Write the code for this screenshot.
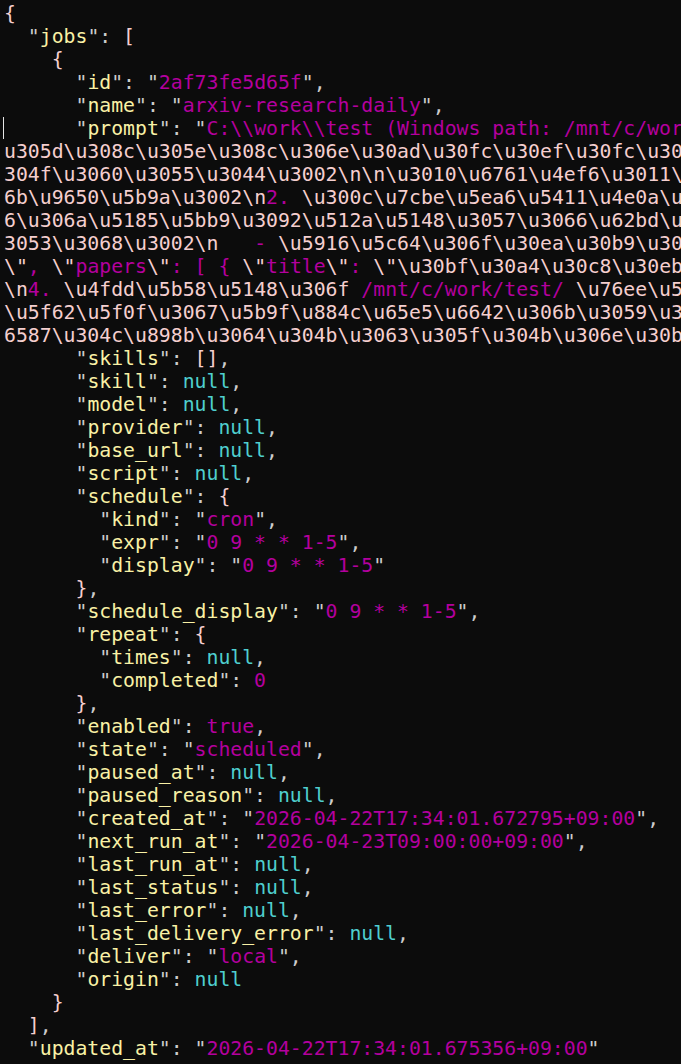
import React from "react";

// terminal palette
const G = "text-[#cccccc]";
const Y = "text-[#f9f1a5]";
const M = "text-[#b4009e]";
const C = "text-[#4fcfcf]";
const P = "text-[#f5cfcf]";

type Seg = [string, string];

const sp = (n: number) => " ".repeat(n);
const key = (indent: number, name: string): Seg[] => [
  [G, sp(indent) + '"'],
  [Y, name],
  [G, '": '],
];
const str = (v: string, comma = true): Seg[] => [
  [G, '"'],
  [M, v],
  [G, comma ? '",' : '"'],
];
const nul = (comma = true): Seg[] => (comma ? [[C, "null"], [G, ","]] : [[C, "null"]]);
const brace = (indent: number, b: string, comma = false): Seg[] =>
  comma ? [[P, sp(indent) + b], [G, ","]] : [[P, sp(indent) + b]];

// escapes in pink, the rest of the string in magenta
const esc = (t: string, head = ""): Seg[] => {
  const out: Seg[] = head ? [[P, head]] : [];
  t.split(/(\\u[0-9a-f]{4}|\\n|\\")/)
    .filter(Boolean)
    .forEach((part) => out.push([/^\\(u[0-9a-f]{4}|n|")$/.test(part) ? P : M, part]));
  return out;
};

const lines: Seg[][] = [
  brace(0, "{"),
  [...key(2, "jobs"), [P, "["]],
  brace(4, "{"),
  [...key(6, "id"), ...str("2af73fe5d65f")],
  [...key(6, "name"), ...str("arxiv-research-daily")],
  [...key(6, "prompt"), [G, '"'], [M, String.raw`C:\\work\\test (Windows path: /mnt/c/work/test/) `]],
  esc(String.raw`\u308c\u305e\u308c\u306e\u30ad\u30fc\u30ef\u30fc\u30c9\u3067\u691c`, "u305d"),
  esc(String.raw`\u3060\u3055\u3044\u3002\n\n\u3010\u6761\u4ef6\u3011\u6700\u65b0`, "304f"),
  esc(String.raw`\u9650\u5b9a\u3002\n2. \u300c\u7cbe\u5ea6\u5411\u4e0a\u300d\u306e`, "6b"),
  esc(String.raw`\u306a\u5185\u5bb9\u3092\u512a\u5148\u3057\u3066\u62bd\u51fa\u3059`, "6"),
  esc(String.raw`\u3068\u3002\n   - \u5916\u5c64\u306f\u30ea\u30b9\u30c8\u3067`, "3053"),
  esc(String.raw`\", \"papers\": [ { \"title\": \"\u30bf\u30a4\u30c8\u30eb\u30c8\u3067`),
  esc(String.raw`\n4. \u4fdd\u5b58\u5148\u306f /mnt/c/work/test/ \u76ee\u5f55\u3067`),
  esc(String.raw`\u5f62\u5f0f\u3067\u5b9f\u884c\u65e5\u6642\u306b\u3059\u308b\u3002`),
  esc(String.raw`\u304c\u898b\u3064\u304b\u3063\u305f\u304b\u306e\u30b0\u3002`, "6587"),
  [...key(6, "skills"), [P, "[]"], [G, ","]],
  [...key(6, "skill"), ...nul()],
  [...key(6, "model"), ...nul()],
  [...key(6, "provider"), ...nul()],
  [...key(6, "base_url"), ...nul()],
  [...key(6, "script"), ...nul()],
  [...key(6, "schedule"), [P, "{"]],
  [...key(8, "kind"), ...str("cron")],
  [...key(8, "expr"), ...str("0 9 * * 1-5")],
  [...key(8, "display"), ...str("0 9 * * 1-5", false)],
  brace(6, "}", true),
  [...key(6, "schedule_display"), ...str("0 9 * * 1-5")],
  [...key(6, "repeat"), [P, "{"]],
  [...key(8, "times"), ...nul()],
  [...key(8, "completed"), [M, "0"]],
  brace(6, "}", true),
  [...key(6, "enabled"), [M, "true"], [G, ","]],
  [...key(6, "state"), ...str("scheduled")],
  [...key(6, "paused_at"), ...nul()],
  [...key(6, "paused_reason"), ...nul()],
  [...key(6, "created_at"), ...str("2026-04-22T17:34:01.672795+09:00")],
  [...key(6, "next_run_at"), ...str("2026-04-23T09:00:00+09:00")],
  [...key(6, "last_run_at"), ...nul()],
  [...key(6, "last_status"), ...nul()],
  [...key(6, "last_error"), ...nul()],
  [...key(6, "last_delivery_error"), ...nul()],
  [...key(6, "deliver"), ...str("local")],
  [...key(6, "origin"), ...nul(false)],
  brace(4, "}"),
  brace(2, "]", true),
  [...key(2, "updated_at"), ...str("2026-04-22T17:34:01.675356+09:00", false)],
];

export default function App() {
  return (
    <div className="h-screen w-full overflow-hidden bg-[#0c0c0c] pt-[2px] pl-[4px] font-['DejaVu_Sans_Mono',monospace] text-[19.8px] leading-[23px]">
      {lines.map((segs, i) => (
        <div key={i} className="relative h-[23px] whitespace-pre overflow-hidden">
          {segs.map(([cls, t], j) => (
            <span key={j} className={cls}>
              {t}
            </span>
          ))}
        </div>
      ))}
      {/* cursor */}
      <div className="absolute left-[3px] top-[117px] h-[22px] w-px bg-[#e6e6e6]" />
    </div>
  );
}
